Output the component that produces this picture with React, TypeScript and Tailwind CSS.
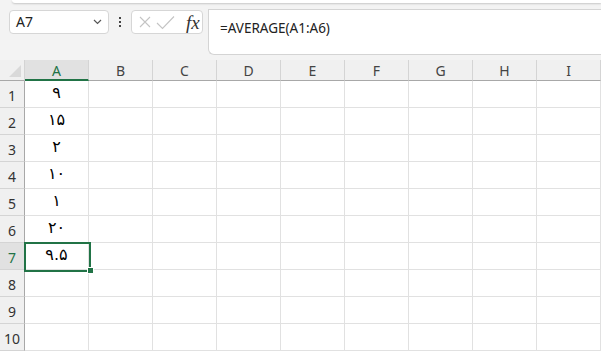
import React from "react";

const cols = ["A", "B", "C", "D", "E", "F", "G", "H", "I"];
const values = ["۹", "۱۵", "۲", "۱۰", "۱", "۲۰", "۹.۵", "", "", ""];

export default function App() {
  return (
    <div
      className="relative w-[601px] h-[351px] overflow-hidden bg-[#f3f3f3]"
      style={{ fontFamily: '"Noto Sans", "Open Sans", sans-serif' }}
    >
      {/* ribbon edge */}
      <div className="h-[3px] ml-[12px] bg-white rounded-bl-[6px] shadow-[0_1px_2px_rgba(0,0,0,0.18)]" />

      {/* formula row */}
      <div className="flex items-start mt-[6px] h-[46px]">
        <div className="ml-[9px] mt-[1px] w-[100px] h-[24px] bg-white border border-[#d6d6d6] rounded-[4px] flex items-center pl-[6px] pr-[6px]">
          <span className="text-[14px] text-[#222] flex-1 leading-none">A7</span>
          <svg width="9" height="6" viewBox="0 0 9 6" fill="none">
            <path d="M1 1l3.5 3.5L8 1" stroke="#555" strokeWidth="1.2" />
          </svg>
        </div>
        <div className="w-[22px] h-[26px] flex flex-col items-center justify-center gap-[2px]">
          <div className="w-[2px] h-[2px] bg-[#444]" />
          <div className="w-[2px] h-[2px] bg-[#444]" />
          <div className="w-[2px] h-[2px] bg-[#444]" />
        </div>
        <div className="mt-[1px] w-[72px] h-[24px] bg-white border border-[#d6d6d6] rounded-[4px] flex items-center pl-[6px]">
          <svg width="14" height="14" viewBox="0 0 14 14" fill="none">
            <path d="M2 2l10 10M12 2L2 12" stroke="#c4c4c4" strokeWidth="1.1" />
          </svg>
          <svg width="19" height="15" viewBox="0 0 19 15" fill="none" className="ml-[4px]">
            <path d="M1 8l5.5 5.5L18 1.5" stroke="#c4c4c4" strokeWidth="1.1" />
          </svg>
          <span
            className="ml-[11px] text-[19px] italic text-[#333] leading-none"
            style={{ fontFamily: '"Liberation Serif", serif' }}
          >
            fx
          </span>
        </div>
        <div className="ml-[5px] flex-1 h-[46px] bg-white border border-[#d4d4d4] border-r-0 rounded-bl-[6px] pl-[11px] pt-[5px]">
          <span className="text-[13.5px] text-[#222]">=AVERAGE(A1:A6)</span>
        </div>
      </div>

      <div className="h-[5px]" />

      {/* grid */}
      <div className="grid grid-cols-[25px_repeat(9,64px)]">
        {/* corner */}
        <div className="h-[21px] bg-[#f0f0f0] border-r border-b border-[#a8a8a8] border-r-[#d4d4d4] flex items-end justify-end pr-[3px] pb-[3px]">
          <svg width="12" height="12" viewBox="0 0 12 12">
            <path d="M12 0V12H0Z" fill="#d9d9d9" />
          </svg>
        </div>
        {cols.map((c) =>
          c === "A" ? (
            <div
              key={c}
              className="h-[21px] bg-[#e1e1e1] border-r border-[#d4d4d4] border-b-2 border-b-[#217346] flex items-center justify-center text-[14px] text-[#217346] pt-[1px]"
            >
              {c}
            </div>
          ) : (
            <div
              key={c}
              className="h-[21px] bg-[#f0f0f0] border-r border-[#d4d4d4] border-b border-b-[#a8a8a8] flex items-center justify-center text-[14px] text-[#444]"
            >
              {c}
            </div>
          )
        )}
        {values.map((v, i) => (
          <React.Fragment key={i}>
            <div
              className={
                i === 6
                  ? "h-[27px] bg-[#e1e1e1] border-r border-b border-[#a8a8a8] border-b-[#d4d4d4] flex items-end justify-center pb-[1px] text-[14px] leading-[20px] text-[#217346]"
                  : "h-[27px] bg-[#f0f0f0] border-r border-b border-[#a8a8a8] border-b-[#d4d4d4] flex items-end justify-center pb-[1px] text-[14px] leading-[20px] text-[#333]"
              }
            >
              {i + 1}
            </div>
            {cols.map((c) => (
              <div
                key={c}
                className="h-[27px] bg-white border-r border-b border-[#e1e1e1] flex items-center justify-center pb-[3px] text-[16px] text-black"
                style={{ fontFamily: '"DejaVu Sans", sans-serif' }}
              >
                {c === "A" ? v : ""}
              </div>
            ))}
          </React.Fragment>
        ))}
      </div>

      {/* selection */}
      <div className="absolute left-[24px] top-[242px] w-[67px] h-[30px] border-2 border-[#217346]" />
      <div className="absolute left-[87px] top-[267px] w-[7px] h-[7px] bg-[#217346] border border-white" />
    </div>
  );
}
